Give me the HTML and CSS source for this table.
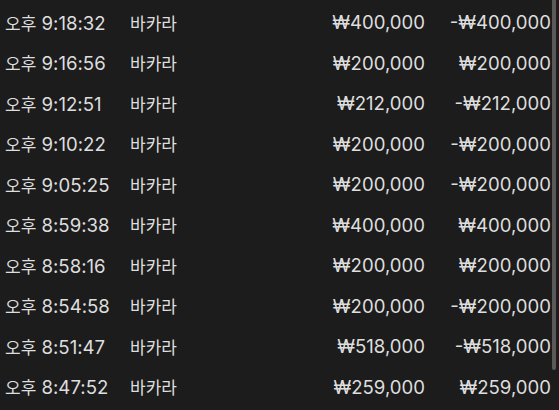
FILE: index.html
```html
<!DOCTYPE html>
<html lang="ko">
<head>
<meta charset="utf-8">
<link rel="stylesheet" href="styles.css">
</head>
<body>
<div class="list">
  <div class="row"><span class="time"><span class="ko">오후</span> 9:18:32</span><span class="game ko">바카라</span><span class="bet">₩400,000</span><span class="win">-₩400,000</span></div>
  <div class="row"><span class="time"><span class="ko">오후</span> 9:16:56</span><span class="game ko">바카라</span><span class="bet">₩200,000</span><span class="win">₩200,000</span></div>
  <div class="row"><span class="time"><span class="ko">오후</span> 9:12:51</span><span class="game ko">바카라</span><span class="bet">₩212,000</span><span class="win">-₩212,000</span></div>
  <div class="row"><span class="time"><span class="ko">오후</span> 9:10:22</span><span class="game ko">바카라</span><span class="bet">₩200,000</span><span class="win">-₩200,000</span></div>
  <div class="row"><span class="time"><span class="ko">오후</span> 9:05:25</span><span class="game ko">바카라</span><span class="bet">₩200,000</span><span class="win">-₩200,000</span></div>
  <div class="row"><span class="time"><span class="ko">오후</span> 8:59:38</span><span class="game ko">바카라</span><span class="bet">₩400,000</span><span class="win">₩400,000</span></div>
  <div class="row"><span class="time"><span class="ko">오후</span> 8:58:16</span><span class="game ko">바카라</span><span class="bet">₩200,000</span><span class="win">₩200,000</span></div>
  <div class="row"><span class="time"><span class="ko">오후</span> 8:54:58</span><span class="game ko">바카라</span><span class="bet">₩200,000</span><span class="win">-₩200,000</span></div>
  <div class="row"><span class="time"><span class="ko">오후</span> 8:51:47</span><span class="game ko">바카라</span><span class="bet">₩518,000</span><span class="win">-₩518,000</span></div>
  <div class="row"><span class="time"><span class="ko">오후</span> 8:47:52</span><span class="game ko">바카라</span><span class="bet">₩259,000</span><span class="win">₩259,000</span></div>
  <div class="scrollbar"></div>
</div>
</body>
</html>
```

FILE: styles.css
```css
html, body {
  margin: 0;
  padding: 0;
  background: #1c1c1c;
}
body {
  width: 559px;
  height: 410px;
  overflow: hidden;
  font-family: "Inter", "Noto Sans CJK KR", sans-serif;
  font-size: 18.6px;
  color: #dedede;
}
.ko {
  font-family: "Noto Sans CJK KR", sans-serif;
  font-size: 17px;
}
.list {
  position: relative;
  padding-top: 2px;
}
.row {
  display: grid;
  grid-template-columns: 125px 120px 175px 126px;
  align-items: center;
  height: 40.5px;
  padding-left: 5px;
  white-space: nowrap;
}
.bet, .win {
  text-align: right;
}
.scrollbar {
  position: absolute;
  top: 0;
  left: 552px;
  width: 4px;
  height: 370px;
  background: #595959;
  border-radius: 0 0 2px 2px;
}
```
